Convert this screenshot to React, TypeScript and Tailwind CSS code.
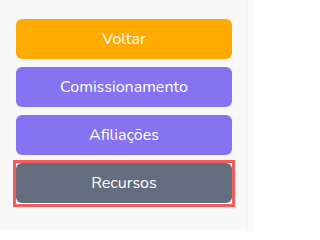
import React from 'react'

const buttons = [
  { label: 'Voltar', className: 'bg-[#ffaa00]' },
  { label: 'Comissionamento', className: 'bg-[#8573f2]' },
  { label: 'Afiliações', className: 'bg-[#8573f2]' },
]

export default function App() {
  return (
    <div
      className="flex h-[230px] w-[254px] bg-[#f8f8f8]"
      style={{ fontFamily: 'Nunito, "Noto Sans", Inter, sans-serif' }}
    >
      <div className="flex w-[248px] flex-col gap-2 px-4 pt-[19px]">
        {buttons.map((b) => (
          <button
            key={b.label}
            className={`flex h-10 w-full items-center justify-center rounded-md text-[16px] text-white ${b.className}`}
          >
            {b.label}
          </button>
        ))}
        {/* selected item */}
        <div className="-mx-[3px] -mt-[3px] border-[3px] border-[#f75c5c] bg-white pb-px">
          <button className="flex h-10 w-[216px] items-center justify-center rounded-md bg-[#646d7d] text-[16px] text-white">
            Recursos
          </button>
        </div>
      </div>
      <div className="flex-1 bg-[#fbfbfb] shadow-[-1px_0_3px_rgba(0,0,0,0.03)]" />
    </div>
  )
}
